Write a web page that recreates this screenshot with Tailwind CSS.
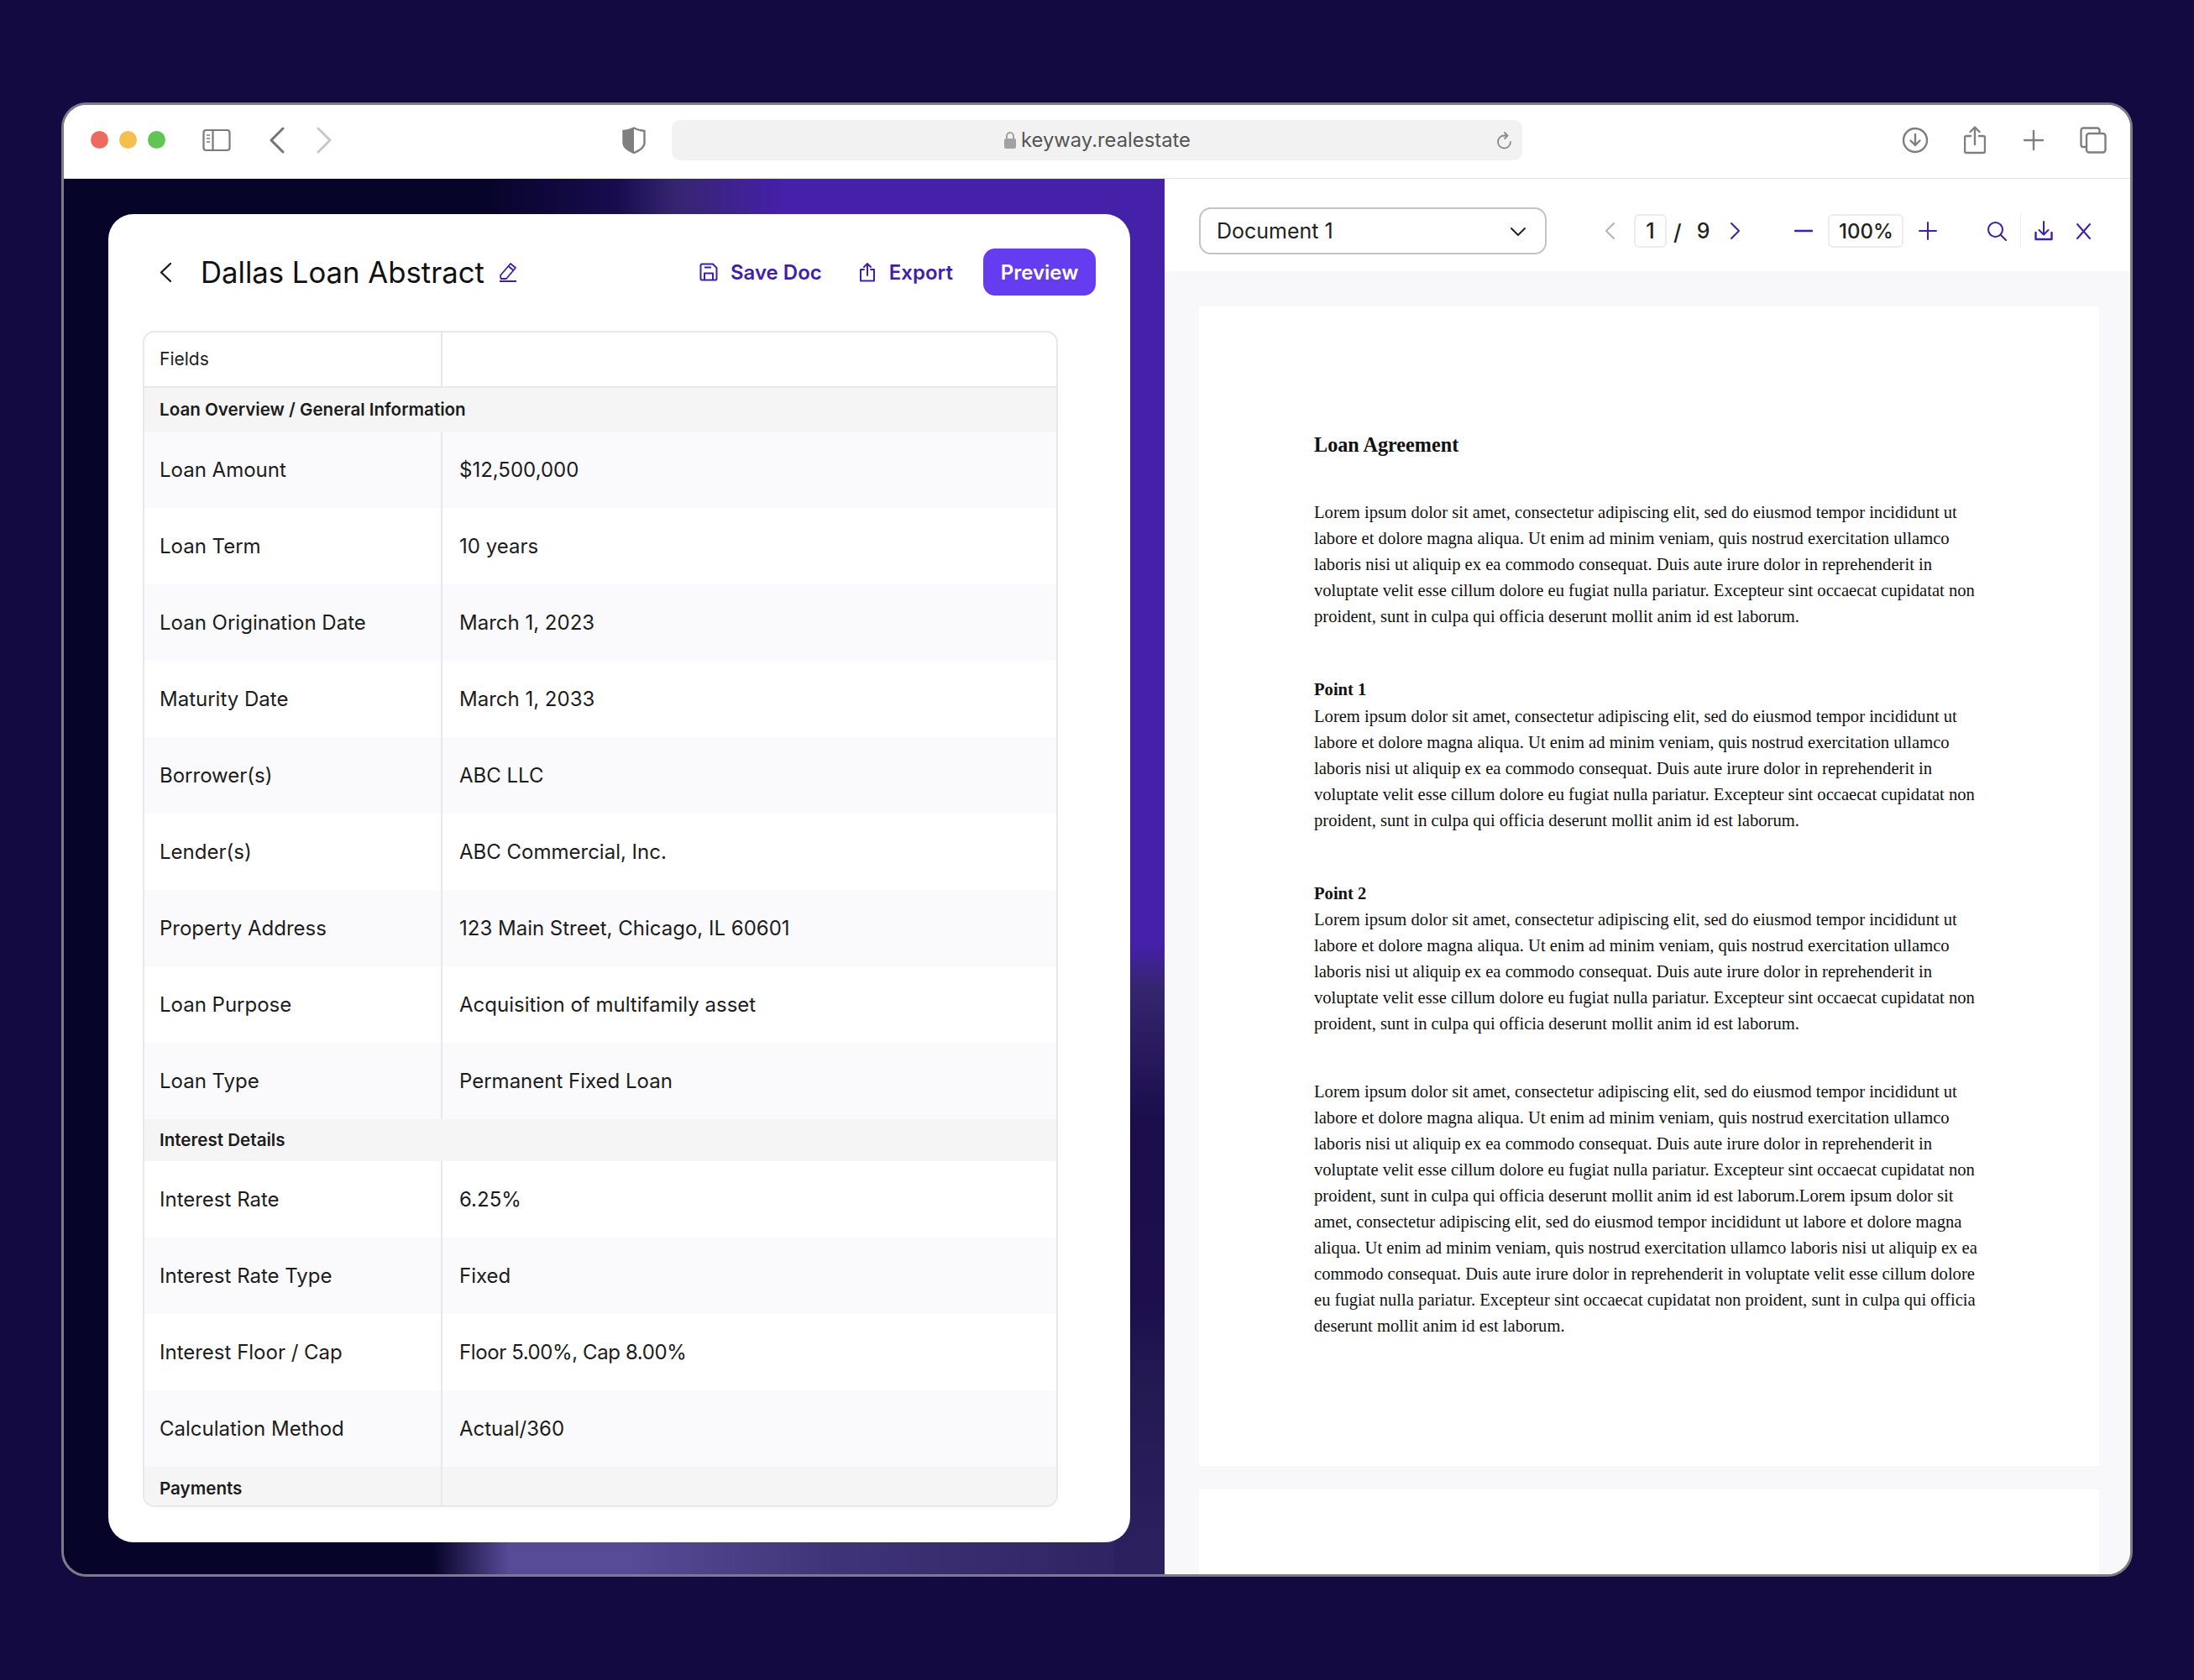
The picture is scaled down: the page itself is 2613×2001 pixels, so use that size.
<!DOCTYPE html>
<html lang="en">
<head>
  <meta charset="UTF-8" />
  <title>Dallas Loan Abstract - Keyway</title>
  <script src="https://cdn.jsdelivr.net/npm/@tailwindcss/browser@4"></script>
</head>
<body class="w-[2613px] h-[2001px] overflow-hidden bg-[#130a42] pt-[122px] pl-[73px] font-['Inter',sans-serif]">
  <div class="w-[2467px] h-[1756px] flex flex-col rounded-[30px] border-[3px] border-[#7d7b85] overflow-hidden bg-white">

    <!-- browser bar -->
    <div class="h-[88px] shrink-0 relative flex items-center bg-white border-b border-[#e2e2e4] pl-[32px] pb-[4px]">
      <div class="flex gap-[13px]">
        <span class="w-[21px] h-[21px] rounded-full bg-[#ed6a5f]"></span>
        <span class="w-[21px] h-[21px] rounded-full bg-[#f4bf4f]"></span>
        <span class="w-[21px] h-[21px] rounded-full bg-[#61c554]"></span>
      </div>
      <svg class="ml-[44px]" width="34" height="28" viewBox="0 0 34 28" fill="none" stroke="#7a7a7a" stroke-width="2.2"><rect x="1.5" y="2" width="31" height="24" rx="3"/><path d="M12.5 2v24"/><path d="M5 8h4M5 12h4M5 16h4" stroke-width="1.6"/></svg>
      <svg class="ml-[45px]" width="20" height="32" viewBox="0 0 20 32" fill="none" stroke="#757575" stroke-width="3" stroke-linecap="round" stroke-linejoin="round"><path d="M17 2 3 16l14 14"/></svg>
      <svg class="ml-[36px]" width="20" height="32" viewBox="0 0 20 32" fill="none" stroke="#c8c8c8" stroke-width="3" stroke-linecap="round" stroke-linejoin="round"><path d="M3 2l14 14L3 30"/></svg>
      <svg class="ml-[344px]" width="30" height="32" viewBox="0 0 30 32"><path d="M15 1.500C12 3 7 4.500 2.500 5v14c0 6 7.500 10 12.500 12 5-2 12.500-6 12.500-12V5C23 4.500 18 3 15 1.500Z" fill="#fff" stroke="#7f7f7f" stroke-width="2.400"/><path d="M15 1.500C12 3 7 4.500 2.500 5v14c0 6 7.500 10 12.500 12Z" fill="#7f7f7f"/></svg>
      <div class="ml-[30px] w-[1013px] h-[48px] rounded-[10px] bg-[#f2f2f2] relative flex items-center justify-center text-[23.8px] text-[#555]">
        <svg class="mr-[5px]" width="16" height="22" viewBox="0 0 16 22" fill="#a2a2a2"><path d="M4 9V6a4 4 0 0 1 8 0v3" fill="none" stroke="#a2a2a2" stroke-width="2"/><rect x="1" y="9" width="14" height="12" rx="2"/></svg>
        keyway.realestate
        <svg class="absolute right-[11px] top-[14px]" width="20" height="22" viewBox="0 0 20 22" fill="none" stroke="#8a8a8a" stroke-width="1.8" stroke-linecap="round"><path d="M17 12a7.5 7.5 0 1 1-7.5-7.5H13"/><path d="M10 1l3.5 3.5L10 8" stroke-linejoin="round"/></svg>
      </div>
      <svg class="ml-[452px]" width="32" height="32" viewBox="0 0 32 32" fill="none" stroke="#7f7f7f" stroke-width="2.4" stroke-linecap="round" stroke-linejoin="round"><circle cx="16" cy="16" r="14"/><path d="M16 9v13M10.5 16.5 16 22l5.5-5.5"/></svg>
      <svg class="ml-[42px]" width="26" height="34" viewBox="0 0 26 34" fill="none" stroke="#7f7f7f" stroke-width="2.4" stroke-linecap="round" stroke-linejoin="round"><path d="M8 12H3a2 2 0 0 0-2 2v16a2 2 0 0 0 2 2h20a2 2 0 0 0 2-2V14a2 2 0 0 0-2-2h-5"/><path d="M13 22V2M7.5 7 13 1.5 18.5 7"/></svg>
      <svg class="ml-[44px]" width="26" height="26" viewBox="0 0 26 26" fill="none" stroke="#7f7f7f" stroke-width="2.4" stroke-linecap="round"><path d="M13 2v22M2 13h22"/></svg>
      <svg class="ml-[42px]" width="32" height="32" viewBox="0 0 32 32" fill="none" stroke="#7f7f7f" stroke-width="2.4" stroke-linejoin="round"><path d="M7 24H4a2.5 2.5 0 0 1-2.500-2.500V4A2.500 2.500 0 0 1 4 1.500h17A2.500 2.500 0 0 1 23.500 4v4"/><rect x="8" y="8" width="22.500" height="22.500" rx="3"/></svg>
    </div>

    <div class="flex-1 flex min-h-0">
      <!-- left: abstract editor on the gradient -->
      <div class="w-[1311px] shrink-0 pt-[42px] pl-[53px] bg-[#07042a] relative overflow-hidden">
        <div class="absolute left-0 right-0 top-0 h-[50px] bg-[linear-gradient(90deg,#07042a_506px,#180c50_660px,#35256f_727px,#4520a8_854px)]"></div>
        <div class="absolute left-0 right-0 bottom-0 h-[60px] bg-[linear-gradient(90deg,#07042a_440px,#574a96_530px,#574a96_674px,#3f3478_914px,#2d2060_1311px)]"></div>
        <div class="absolute right-0 top-0 bottom-0 w-[60px] bg-[linear-gradient(180deg,#4520a8_912px,#35256f_965px,#1a0d4a_1125px,#1c0f4c_1337px,#241a52_1445px,#2d2060_1662px)]"></div>

        <div class="relative w-[1217px] h-[1582px] rounded-[30px] bg-white pt-[41px] px-[41px]">
          <div class="h-[56px] flex items-center">
            <svg class="ml-[20px]" width="15" height="25" viewBox="0 0 15 25" fill="none" stroke="#1c1c1c" stroke-width="2.4" stroke-linecap="round" stroke-linejoin="round"><path d="M13 2 2 12.500 13 23"/></svg>
            <h1 class="ml-[34px] text-[34.7px] leading-none font-normal text-[#111]">Dallas Loan Abstract</h1>
            <svg class="ml-[16px]" width="24" height="24" viewBox="0 0 24 24" fill="none" stroke="#3f1fa8" stroke-width="1.800" stroke-linejoin="round"><path d="M3 16 15 2l6 5-11 13H3.500Z"/><path d="M12.500 5l6 5M2 23h20"/></svg>
            <svg class="ml-auto" width="22" height="22" viewBox="0 0 22 22" fill="none" stroke="#3f1fa8" stroke-width="2" stroke-linejoin="round"><path d="M3 1.500h13l4.500 4.500v13a1.500 1.500 0 0 1-1.500 1.500H3A1.500 1.500 0 0 1 1.500 19V3A1.500 1.500 0 0 1 3 1.500Z"/><path d="M6 20.500v-8h10v8M6 5.500h8"/></svg>
            <span class="ml-[15px] pt-[2px] text-[24px] font-semibold text-[#3f1fa8]">Save Doc</span>
            <svg class="ml-[44px]" width="20" height="24" viewBox="0 0 20 24" fill="none" stroke="#3f1fa8" stroke-width="2" stroke-linecap="round" stroke-linejoin="round"><path d="M6 9H2v13.500h16V9h-4"/><path d="M10 16V2M6 6l4-4 4 4"/></svg>
            <span class="ml-[16px] pt-[2px] text-[24px] font-semibold text-[#3f1fa8]">Export</span>
            <button class="ml-[36px] w-[134px] h-[56px] pt-[1px] rounded-[14px] bg-[#653cf0] text-white text-[24px] font-semibold">Preview</button>
          </div>

          <div class="mt-[42px] w-[1090px] h-[1401px] rounded-[14px] border-2 border-[#e8e8eb] overflow-hidden text-[24px] text-[#1c1c1e]">
            <div class="h-[66px] grid grid-cols-[355px_1fr] border-b-2 border-[#e8e8eb] text-[21px]">
              <div class="border-r-2 border-[#e8e8eb] px-[18px] flex items-center">Fields</div><div></div>
            </div>
            <div class="h-[52px] flex items-center px-[18px] bg-[#f5f5f5] text-[20.600px] font-semibold">Loan Overview / General Information</div>
            <div class="h-[91px] grid grid-cols-[355px_1fr] bg-[#fafafc]"><div class="border-r-2 border-[#e8e8eb] px-[18px] flex items-center">Loan Amount</div><div class="px-[20px] flex items-center">$12,500,000</div></div>
            <div class="h-[91px] grid grid-cols-[355px_1fr]"><div class="border-r-2 border-[#e8e8eb] px-[18px] flex items-center">Loan Term</div><div class="px-[20px] flex items-center">10 years</div></div>
            <div class="h-[91px] grid grid-cols-[355px_1fr] bg-[#fafafc]"><div class="border-r-2 border-[#e8e8eb] px-[18px] flex items-center">Loan Origination Date</div><div class="px-[20px] flex items-center">March 1, 2023</div></div>
            <div class="h-[91px] grid grid-cols-[355px_1fr]"><div class="border-r-2 border-[#e8e8eb] px-[18px] flex items-center">Maturity Date</div><div class="px-[20px] flex items-center">March 1, 2033</div></div>
            <div class="h-[91px] grid grid-cols-[355px_1fr] bg-[#fafafc]"><div class="border-r-2 border-[#e8e8eb] px-[18px] flex items-center">Borrower(s)</div><div class="px-[20px] flex items-center">ABC LLC</div></div>
            <div class="h-[91px] grid grid-cols-[355px_1fr]"><div class="border-r-2 border-[#e8e8eb] px-[18px] flex items-center">Lender(s)</div><div class="px-[20px] flex items-center">ABC Commercial, Inc.</div></div>
            <div class="h-[91px] grid grid-cols-[355px_1fr] bg-[#fafafc]"><div class="border-r-2 border-[#e8e8eb] px-[18px] flex items-center">Property Address</div><div class="px-[20px] flex items-center">123 Main Street, Chicago, IL 60601</div></div>
            <div class="h-[91px] grid grid-cols-[355px_1fr]"><div class="border-r-2 border-[#e8e8eb] px-[18px] flex items-center">Loan Purpose</div><div class="px-[20px] flex items-center">Acquisition of multifamily asset</div></div>
            <div class="h-[91px] grid grid-cols-[355px_1fr] bg-[#fafafc]"><div class="border-r-2 border-[#e8e8eb] px-[18px] flex items-center">Loan Type</div><div class="px-[20px] flex items-center">Permanent Fixed Loan</div></div>
            <div class="h-[50px] flex items-center px-[18px] bg-[#f5f5f5] text-[20.600px] font-semibold">Interest Details</div>
            <div class="h-[91px] grid grid-cols-[355px_1fr]"><div class="border-r-2 border-[#e8e8eb] px-[18px] flex items-center">Interest Rate</div><div class="px-[20px] flex items-center">6.25%</div></div>
            <div class="h-[91px] grid grid-cols-[355px_1fr] bg-[#fafafc]"><div class="border-r-2 border-[#e8e8eb] px-[18px] flex items-center">Interest Rate Type</div><div class="px-[20px] flex items-center">Fixed</div></div>
            <div class="h-[91px] grid grid-cols-[355px_1fr]"><div class="border-r-2 border-[#e8e8eb] px-[18px] flex items-center">Interest Floor / Cap</div><div class="px-[20px] flex items-center tracking-[-0.4px]">Floor 5.00%, Cap 8.00%</div></div>
            <div class="h-[91px] grid grid-cols-[355px_1fr] bg-[#fafafc]"><div class="border-r-2 border-[#e8e8eb] px-[18px] flex items-center">Calculation Method</div><div class="px-[20px] flex items-center">Actual/360</div></div>
            <div class="h-[52px] grid grid-cols-[355px_1fr] bg-[#f5f5f5] text-[20.600px] font-semibold"><div class="border-r-2 border-[#e8e8eb] px-[18px] flex items-center">Payments</div><div></div></div>
          </div>
        </div>
      </div>

      <!-- right: document viewer -->
      <div class="flex-1 flex flex-col bg-[#f8f8fb] min-w-0">
        <div class="h-[110px] shrink-0 bg-white flex items-center pl-[41px] pt-[14px] text-[#222]">
          <div class="w-[414px] h-[56px] rounded-[14px] border-2 border-[#c4c4c8] flex items-center justify-between pl-[19px] pr-[22px] pt-[2px] text-[25px]">
            Document 1
            <svg width="20" height="12" viewBox="0 0 20 12" fill="none" stroke="#222" stroke-width="2" stroke-linecap="round" stroke-linejoin="round"><path d="M2 2l8 8 8-8"/></svg>
          </div>
          <svg class="ml-[69px]" width="13" height="22" viewBox="0 0 13 22" fill="none" stroke="#b4b4b8" stroke-width="2" stroke-linecap="round" stroke-linejoin="round"><path d="M11 2 2 11l9 9"/></svg>
          <span class="ml-[22px] w-[39px] h-[40px] pt-[2px] rounded-[6px] border-2 border-[#ececee] flex items-center justify-center text-[25px] font-medium">1</span>
          <span class="ml-[8px] pt-[2px] text-[26px] font-medium">/</span>
          <span class="ml-[18px] pt-[2px] text-[25px] font-medium">9</span>
          <svg class="ml-[24px]" width="13" height="22" viewBox="0 0 13 22" fill="none" stroke="#3f1fa8" stroke-width="2" stroke-linecap="round" stroke-linejoin="round"><path d="M2 2l9 9-9 9"/></svg>
          <svg class="ml-[64px]" width="22" height="4" viewBox="0 0 22 4" fill="none" stroke="#3f1fa8" stroke-width="2.400" stroke-linecap="round"><path d="M1 2h20"/></svg>
          <span class="ml-[18px] w-[90px] h-[40px] pt-[2px] rounded-[6px] border-2 border-[#ececee] flex items-center justify-center text-[24px] font-medium">100%</span>
          <svg class="ml-[18px]" width="22" height="22" viewBox="0 0 22 22" fill="none" stroke="#3f1fa8" stroke-width="2" stroke-linecap="round"><path d="M11 1v20M1 11h20"/></svg>
          <svg class="ml-[59px]" width="24" height="24" viewBox="0 0 24 24" fill="none" stroke="#3f1fa8" stroke-width="2" stroke-linecap="round"><circle cx="10.500" cy="10.500" r="8.500"/><path d="m17 17 6 6"/></svg>
          <span class="ml-[16px] w-px h-[42px] bg-[#eeeeef]"></span>
          <svg class="ml-[16px]" width="22" height="24" viewBox="0 0 22 24" fill="none" stroke="#3f1fa8" stroke-width="2" stroke-linecap="round" stroke-linejoin="round"><path d="M11 1v15M5.500 11l5.500 5.500 5.500-5.500"/><path d="M1.500 14v8h19v-8" stroke-width="2.400"/></svg>
          <svg class="ml-[27px]" width="19" height="21" viewBox="0 0 19 21" fill="none" stroke="#3f1fa8" stroke-width="2" stroke-linecap="round"><path d="M2 2l15 17M17 2 2 19"/></svg>
        </div>

        <div class="flex-1 min-h-0 overflow-hidden pt-[42px] pl-[41px] pr-[37px]">
          <div class="h-[1381px] bg-white pl-[137px] pt-[150px] font-['Liberation_Serif',serif] text-[20.600px] leading-[30.900px] text-[#111] whitespace-nowrap">
            <h2 class="text-[24.200px] font-bold leading-[30px]">Loan Agreement</h2>
            <p class="mt-[50px]">Lorem ipsum dolor sit amet, consectetur adipiscing elit, sed do eiusmod tempor incididunt ut<br>labore et dolore magna aliqua. Ut enim ad minim veniam, quis nostrud exercitation ullamco<br>laboris nisi ut aliquip ex ea commodo consequat. Duis aute irure dolor in reprehenderit in<br>voluptate velit esse cillum dolore eu fugiat nulla pariatur. Excepteur sint occaecat cupidatat non<br>proident, sunt in culpa qui officia deserunt mollit anim id est laborum.</p>
            <p class="mt-[56px] font-bold">Point 1</p>
            <p class="mt-[2px]">Lorem ipsum dolor sit amet, consectetur adipiscing elit, sed do eiusmod tempor incididunt ut<br>labore et dolore magna aliqua. Ut enim ad minim veniam, quis nostrud exercitation ullamco<br>laboris nisi ut aliquip ex ea commodo consequat. Duis aute irure dolor in reprehenderit in<br>voluptate velit esse cillum dolore eu fugiat nulla pariatur. Excepteur sint occaecat cupidatat non<br>proident, sunt in culpa qui officia deserunt mollit anim id est laborum.</p>
            <p class="mt-[56px] font-bold">Point 2</p>
            <p class="mt-[0px]">Lorem ipsum dolor sit amet, consectetur adipiscing elit, sed do eiusmod tempor incididunt ut<br>labore et dolore magna aliqua. Ut enim ad minim veniam, quis nostrud exercitation ullamco<br>laboris nisi ut aliquip ex ea commodo consequat. Duis aute irure dolor in reprehenderit in<br>voluptate velit esse cillum dolore eu fugiat nulla pariatur. Excepteur sint occaecat cupidatat non<br>proident, sunt in culpa qui officia deserunt mollit anim id est laborum.</p>
            <p class="mt-[51px]">Lorem ipsum dolor sit amet, consectetur adipiscing elit, sed do eiusmod tempor incididunt ut<br>labore et dolore magna aliqua. Ut enim ad minim veniam, quis nostrud exercitation ullamco<br>laboris nisi ut aliquip ex ea commodo consequat. Duis aute irure dolor in reprehenderit in<br>voluptate velit esse cillum dolore eu fugiat nulla pariatur. Excepteur sint occaecat cupidatat non<br>proident, sunt in culpa qui officia deserunt mollit anim id est laborum.Lorem ipsum dolor sit<br>amet, consectetur adipiscing elit, sed do eiusmod tempor incididunt ut labore et dolore magna<br>aliqua. Ut enim ad minim veniam, quis nostrud exercitation ullamco laboris nisi ut aliquip ex ea<br>commodo consequat. Duis aute irure dolor in reprehenderit in voluptate velit esse cillum dolore<br>eu fugiat nulla pariatur. Excepteur sint occaecat cupidatat non proident, sunt in culpa qui officia<br>deserunt mollit anim id est laborum.</p>
          </div>
          <div class="mt-[28px] h-[200px] bg-white"></div>
        </div>
      </div>
    </div>
  </div>
</body>
</html>
